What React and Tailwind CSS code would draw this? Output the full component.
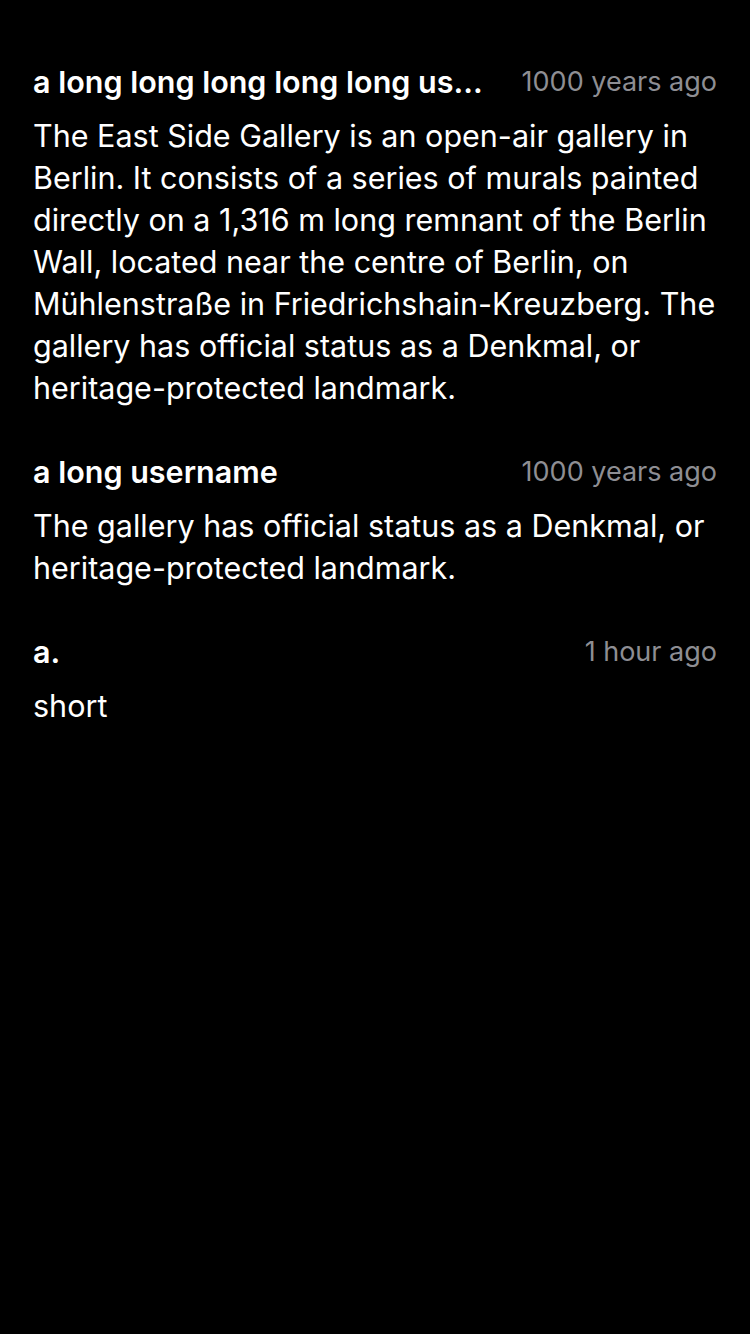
import React from 'react';

const comments = [
  {
    id: 1,
    user: 'a long long long long long us...',
    time: '1000 years ago',
    body: 'The East Side Gallery is an open-air gallery in Berlin. It consists of a series of murals painted directly on a 1,316 m long remnant of the Berlin Wall, located near the centre of Berlin, on Mühlenstraße in Friedrichshain-Kreuzberg. The gallery has official status as a Denkmal, or heritage-protected landmark.',
  },
  {
    id: 2,
    user: 'a long username',
    time: '1000 years ago',
    body: 'The gallery has official status as a Denkmal, or heritage-protected landmark.',
  },
  {
    id: 3,
    user: 'a.',
    time: '1 hour ago',
    body: 'short',
  },
];

function Comment({ comment }) {
  return (
    <div className="flex flex-col">
      <div className="flex items-center justify-between gap-[32px] h-[40px]">
        <span className="min-w-0 truncate text-[30.5px] font-semibold text-white">{comment.user}</span>
        <span className="shrink-0 text-[27px] text-[#8e8e93]">{comment.time}</span>
      </div>
      <p className="mt-[13px] text-[30.5px] leading-[42px] text-white">{comment.body}</p>
    </div>
  );
}

export default function App() {
  return (
    <div
      className="min-h-[1334px] w-full bg-black px-[33px] pt-[62px]"
      style={{ fontFamily: 'Inter, "Noto Sans", sans-serif' }}
    >
      <div className="flex flex-col gap-[43px]">
        {comments.map((c) => (
          <Comment key={c.id} comment={c} />
        ))}
      </div>
    </div>
  );
}
